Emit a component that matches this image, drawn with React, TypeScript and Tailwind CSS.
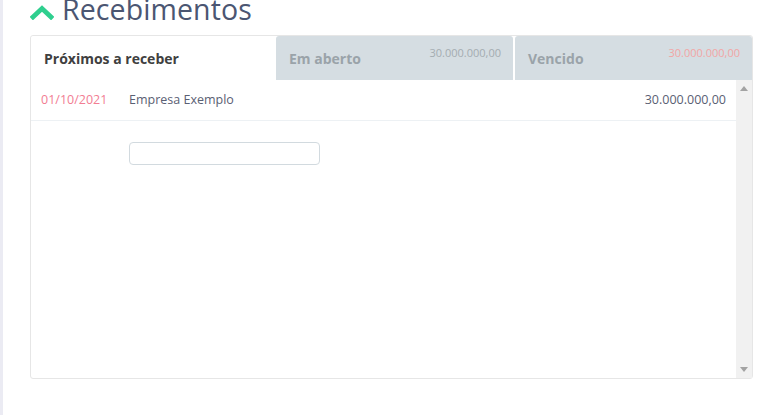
import React from "react";

export default function App() {
  const font = { fontFamily: '"Open Sans", "Liberation Sans", sans-serif' };
  return (
    <div className="flex h-[415px] w-[775px] overflow-hidden bg-white" style={font}>
      <div className="w-[3px] shrink-0 bg-[#ebebf3]" />
      <div className="flex flex-1 flex-col pl-[27px] pr-[22px]">
        <div className="-mt-[17px] flex h-[52px] items-center gap-[8px]">
          <svg width="24" height="15" viewBox="0 0 24 15" className="mt-[7px]">
            <path d="M3 12 L12 3.6 L21 12" fill="none" stroke="#2fcf8f" strokeWidth="4.8" strokeLinecap="square" />
          </svg>
          <span className="text-[28.5px] leading-none tracking-[0.1px] text-[#4b5672]" style={{ fontFamily: '"Open Sans", sans-serif' }}>
            Recebimentos
          </span>
        </div>
        <div className="flex h-[344px] flex-col rounded-[3px] border border-[#e6e6e6]">
          <div className="flex h-[44px] gap-[2px]">
            <div className="flex w-[243px] items-center rounded-tl-[3px] bg-white pl-[13px] text-[14px] font-bold text-[#404040]">
              Próximos a receber
            </div>
            <div className="flex flex-1 items-center justify-between rounded-t-[3px] bg-[#d5dde2] pl-[13px] pr-[12px]">
              <span className="text-[14px] font-bold text-[#9aa3a9]">Em aberto</span>
              <span className="-mt-[9px] text-[11px] text-[#a4acb1]">30.000.000,00</span>
            </div>
            <div className="flex flex-1 items-center justify-between rounded-t-[3px] bg-[#d5dde2] pl-[13px] pr-[12px]">
              <span className="text-[14px] font-bold text-[#9aa3a9]">Vencido</span>
              <span className="-mt-[9px] text-[11px] text-[#f2a5a5]">30.000.000,00</span>
            </div>
          </div>
          <div className="flex flex-1">
            <div className="flex flex-1 flex-col">
              <div className="flex h-[41px] items-center border-b border-[#edf1f4] pl-[10px] pr-[10px] text-[12.5px]">
                <span className="w-[88px] text-[#f27d93]">01/10/2021</span>
                <span className="flex-1 text-[#5a6073]">Empresa Exemplo</span>
                <span className="text-[#5a6073]">30.000.000,00</span>
              </div>
              <div className="pl-[98px] pt-[21px]">
                <div className="h-[23px] w-[191px] rounded-[4px] border-[1.5px] border-[#d2dadf] bg-white" />
              </div>
            </div>
            <div className="flex w-[16px] flex-col items-center justify-between bg-[#f1f1f1] py-[6px]">
              <svg width="8" height="5" viewBox="0 0 8 5">
                <path d="M0 5 L4 0 L8 5 Z" fill="#a3a3a3" />
              </svg>
              <svg width="8" height="5" viewBox="0 0 8 5">
                <path d="M0 0 L4 5 L8 0 Z" fill="#a3a3a3" />
              </svg>
            </div>
          </div>
        </div>
      </div>
    </div>
  );
}
